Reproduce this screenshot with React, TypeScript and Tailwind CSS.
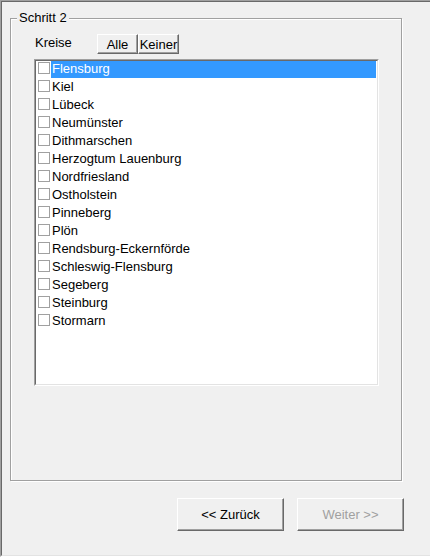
import { useState } from "react";

const KREISE = [
  "Flensburg",
  "Kiel",
  "Lübeck",
  "Neumünster",
  "Dithmarschen",
  "Herzogtum Lauenburg",
  "Nordfriesland",
  "Ostholstein",
  "Pinneberg",
  "Plön",
  "Rendsburg-Eckernförde",
  "Schleswig-Flensburg",
  "Segeberg",
  "Steinburg",
  "Stormarn",
];

const font = "font-['Liberation_Sans',Arial,sans-serif] text-[13px] text-black";

// raised win32 style button
const btn =
  "bg-[#f0f0f0] border border-t-white border-l-white border-r-[#696969] border-b-[#696969] shadow-[inset_-1px_-1px_0_#a0a0a0] flex items-center justify-center leading-none";

export default function App() {
  const [checked, setChecked] = useState<Record<string, boolean>>({});
  const [selected, setSelected] = useState("Flensburg");

  const setAll = (value: boolean) => {
    const next: Record<string, boolean> = {};
    KREISE.forEach((k) => (next[k] = value));
    setChecked(next);
  };

  return (
    <div className={`w-[430px] h-[557px] overflow-hidden bg-[#f0f0f0] ${font}`}>
      {/* outer sunken frame */}
      <div className="w-[450px] h-[557px] border-t border-l border-b border-t-[#a0a0a0] border-l-[#a0a0a0] border-b-white">
        <div className="h-full border-t border-l border-b border-t-[#696969] border-l-[#696969] border-b-[#e3e3e3]">
          {/* Group box "Schritt 2" */}
          <div className="relative ml-[8px] mt-[16px] w-[392px] h-[463px] border border-[#a0a0a0] shadow-[inset_1px_1px_0_#fff,1px_1px_0_#fff]">
            <div className="absolute left-[6px] top-[-9px] bg-[#f0f0f0] px-[2px] leading-[16px]">
              Schritt 2
            </div>

            <div className="ml-[23px] mt-[15px] flex items-start h-[20px]">
              <div className="w-[63px] pl-[1px] mt-[1px] leading-[16px]">Kreise</div>
              <button className={`${btn} w-[41px] h-[20px]`} onClick={() => setAll(true)}>
                Alle
              </button>
              <button className={`${btn} w-[41px] h-[20px]`} onClick={() => setAll(false)}>
                Keiner
              </button>
            </div>

            {/* list box */}
            <div className="ml-[23px] mt-[5px] w-[345px] h-[327px] border-t border-l border-r border-b border-t-[#a0a0a0] border-l-[#a0a0a0] border-r-white border-b-white">
              <div className="h-full bg-white border-t border-l border-r border-b border-t-[#696969] border-l-[#696969] border-r-[#e3e3e3] border-b-[#e3e3e3]">
                {KREISE.map((k) => (
                  <div
                    key={k}
                    className="flex items-start h-[18px] cursor-default"
                    onClick={() => setSelected(k)}
                  >
                    <div
                      className="ml-[2px] mt-[1px] w-[12px] h-[12px] border border-[#a0a0a0] bg-white flex items-center justify-center text-[10px] leading-none"
                      onClick={(e) => {
                        e.stopPropagation();
                        setChecked((prev) => ({ ...prev, [k]: !prev[k] }));
                      }}
                    >
                      {checked[k] ? "✓" : ""}
                    </div>
                    <div
                      className={
                        selected === k
                          ? "ml-[1px] flex-1 mr-[1px] h-[17px] pl-[1px] leading-[16px] bg-[#3399ff] text-white"
                          : "ml-[1px] flex-1 mr-[1px] h-[17px] pl-[1px] leading-[16px]"
                      }
                    >
                      {k}
                    </div>
                  </div>
                ))}
              </div>
            </div>
          </div>

          {/* navigation buttons */}
          <div className="flex ml-[175px] mt-[17px] gap-[13px]">
            <button className={`${btn} w-[107px] h-[33px]`}>&lt;&lt; Zurück</button>
            <button className={`${btn} w-[107px] h-[33px] text-[#a0a0a0]`} disabled>
              Weiter &gt;&gt;
            </button>
          </div>
        </div>
      </div>
    </div>
  );
}
